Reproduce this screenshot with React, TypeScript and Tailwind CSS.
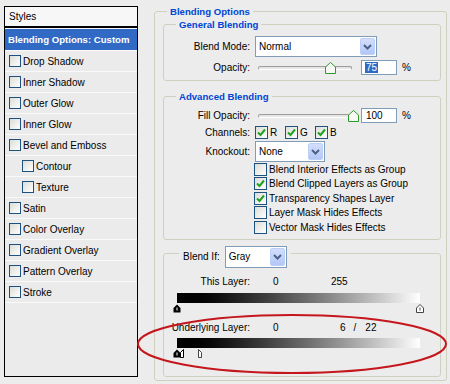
import React from 'react'

const styleItems: [string, boolean][] = [
  ['Drop Shadow', false],
  ['Inner Shadow', false],
  ['Outer Glow', false],
  ['Inner Glow', false],
  ['Bevel and Emboss', false],
  ['Contour', true],
  ['Texture', true],
  ['Satin', false],
  ['Color Overlay', false],
  ['Gradient Overlay', false],
  ['Pattern Overlay', false],
  ['Stroke', false],
]

const options: [string, boolean][] = [
  ['Blend Interior Effects as Group', false],
  ['Blend Clipped Layers as Group', true],
  ['Transparency Shapes Layer', true],
  ['Layer Mask Hides Effects', false],
  ['Vector Mask Hides Effects', false],
]

function Box({ on, small }: { on?: boolean; small?: boolean }) {
  return (
    <span
      className={`${small ? 'w-[12px] h-[12px]' : 'w-[13px] h-[13px]'} shrink-0 border border-[#1c5180] bg-linear-to-br from-[#dcdcd7] to-white flex items-center justify-center`}
    >
      {on && (
        <svg width="9" height="9" viewBox="0 0 9 9">
          <path d="M1 4.5 L3.5 7 L8 1.5" fill="none" stroke="#21a121" strokeWidth="2" />
        </svg>
      )}
    </span>
  )
}

function Select({ value, w }: { value: string; w: string }) {
  return (
    <div className={`${w} h-full border border-[#7f9db9] bg-white flex items-center p-[1px]`}>
      <span className="flex-1 pl-[2px]">{value}</span>
      <span className="w-[15px] h-full rounded-[2px] bg-linear-to-b from-[#d3defc] to-[#b3c7f6] border border-[#bccff8] flex items-center justify-center">
        <svg width="9" height="6" viewBox="0 0 9 6">
          <path d="M1 1 L4.5 4.5 L8 1" fill="none" stroke="#4d6185" strokeWidth="2" />
        </svg>
      </span>
    </div>
  )
}

function Slider({ w, pos }: { w: string; pos: number }) {
  return (
    <div className={`relative ${w} h-[15px] flex items-center`}>
      <div className="w-full h-[4px] rounded-[2px] border border-[#9d9c99] border-b-white bg-[#e6e6e6]" />
      <svg className="absolute top-[2px]" style={{ left: pos }} width="11" height="12" viewBox="0 0 11 12">
        <path d="M0.5 11.5 V5 L5.5 0.5 L10.5 5 V11.5 Z" fill="#f7f7f4" stroke="#2a9a2a" />
      </svg>
    </div>
  )
}

export default function App() {
  return (
    <div className="relative w-[450px] h-[384px] overflow-hidden bg-[#ececec] flex items-start text-[10px] leading-[13px] text-black font-['Liberation_Sans',Arial,sans-serif]">
      {/* styles list */}
      <div className="ml-[4px] mt-[6px] w-[134px] h-[371px] border border-black bg-[#ebebeb] flex flex-col">
        <div className="h-[21px] bg-[#f7f7f7] border-b-2 border-black pl-[4px] flex items-center">Styles</div>
        <div className="h-[1px] bg-[#f7f7f7]" />
        <div className="h-[22px] bg-[#316ac5] text-white font-bold text-[9.6px] pl-[3px] flex items-center border-b border-[#fafafa]">
          Blending Options: Custom
        </div>
        {styleItems.map(([label, indent]) => (
          <div
            key={label}
            className={`h-[21px] border-b border-[#fafafa] flex items-center gap-[2px] ${indent ? 'pl-[17px]' : 'pl-[4px]'}`}
          >
            <Box small />
            <span>{label}</span>
          </div>
        ))}
      </div>

      {/* blending options */}
      <fieldset className="ml-[16px] mt-[5px] w-[293px] border border-[#d0d0bf] rounded-[3px] pl-[8px] pb-[3px]">
        <legend className="ml-[4px] px-[3px] text-[#0046d5] font-bold text-[9.6px] leading-[13px]">Blending Options</legend>

        <fieldset className="w-[278px] border border-[#d0d0bf] rounded-[3px] pb-[5px]">
          <legend className="ml-[12px] px-[3px] text-[#0046d5] font-bold text-[9.6px] leading-[13px]">General Blending</legend>
          <div className="mt-[5px] h-[21px] flex items-center">
            <span className="w-[86px] text-right">Blend Mode:</span>
            <div className="ml-[5px] h-full">
              <Select value="Normal" w="w-[122px]" />
            </div>
          </div>
          <div className="mt-[3px] h-[15px] flex items-center">
            <span className="w-[86px] text-right">Opacity:</span>
            <div className="ml-[8px]">
              <Slider w="w-[94px]" pos={67} />
            </div>
            <div className="ml-[9px] w-[36px] h-[15px] border border-[#7f9db9] bg-white flex items-center pl-[3px]">
              <span className="bg-[#316ac5] text-white px-[1px] leading-[11px]">75</span>
            </div>
            <span className="ml-[5px]">%</span>
          </div>
        </fieldset>

        <fieldset className="mt-[9px] w-[278px] border border-[#d0d0bf] rounded-[3px] pb-[4px]">
          <legend className="ml-[12px] px-[3px] text-[#0046d5] font-bold text-[9.6px] leading-[13px]">Advanced Blending</legend>
          <div className="mt-[5px] h-[15px] flex items-center">
            <span className="w-[86px] text-right">Fill Opacity:</span>
            <div className="ml-[8px]">
              <Slider w="w-[92px]" pos={90} />
            </div>
            <div className="ml-[11px] w-[36px] h-[15px] border border-[#7f9db9] bg-white flex items-center pl-[4px]">
              100
            </div>
            <span className="ml-[5px]">%</span>
          </div>
          <div className="mt-[3px] h-[13px] flex items-center">
            <span className="w-[86px] text-right">Channels:</span>
            <div className="ml-[5px] flex items-center">
              {['R', 'G', 'B'].map(c => (
                <span key={c} className="w-[30px] flex items-center gap-[2px]">
                  <Box on />
                  <span>{c}</span>
                </span>
              ))}
            </div>
          </div>
          <div className="mt-[2px] h-[21px] flex items-center">
            <span className="w-[86px] text-right">Knockout:</span>
            <div className="ml-[5px] h-full">
              <Select value="None" w="w-[70px]" />
            </div>
          </div>
          <div className="pl-[90px]">
            {options.map(([label, on]) => (
              <div key={label} className="h-[14.5px] flex items-center gap-[2px]">
                <Box on={on} />
                <span>{label}</span>
              </div>
            ))}
          </div>
        </fieldset>

        <fieldset className="mt-[6px] w-[278px] border border-[#d0d0bf] rounded-[3px] pb-[18px]">
          <legend className="ml-[15px] px-[4px] h-[16px]">
            <div className="flex items-start gap-[5px]">
              <span className="mt-[4px] leading-[13px]">Blend If:</span>
              <div className="h-[22px]">
                <Select value="Gray" w="w-[62px]" />
              </div>
            </div>
          </legend>

          <div className="mt-[13px] h-[13px] flex items-center">
            <span className="w-[86px] text-right">This Layer:</span>
            <span className="ml-[23px] w-[58px]">0</span>
            <span>255</span>
          </div>
          <div className="mt-[5px] ml-[13px] w-[243px] h-[10px] bg-linear-to-r from-black to-white" />
          <svg className="mt-[1px] ml-[6px] block" width="256" height="9" viewBox="0 0 256 9">
            <path d="M7 0.5 L10.5 4 V8.5 H3.5 V4 Z" fill="#000" />
            <path d="M7 3.5 V6.5" stroke="#fff" strokeWidth="1" />
            <path d="M250 0.5 L253.5 4 V8.5 H246.5 V4 Z" fill="#fff" stroke="#444" />
            <path d="M250 3.5 V6.5" stroke="#444" strokeWidth="1" />
          </svg>

          <div className="mt-[8px] h-[13px] flex items-center">
            <span className="w-[86px] text-right">Underlying Layer:</span>
            <span className="ml-[23px] w-[67px]">0</span>
            <span>6</span>
            <span className="ml-[8px]">/</span>
            <span className="ml-[9px]">22</span>
          </div>
          <div className="mt-[4px] ml-[13px] w-[243px] h-[10px] bg-linear-to-r from-black to-white" />
          <svg className="mt-[1px] ml-[6px] block" width="256" height="9" viewBox="0 0 256 9">
            <path d="M7 0.5 L10.5 4 V8.5 H3.5 V4 Z" fill="#000" />
            <path d="M7 3.5 V6.5" stroke="#fff" strokeWidth="1" />
            <path d="M13.5 0.5 V8.5 H10.5 V3.5 Z" fill="#fff" stroke="#000" />
            <path d="M28.5 0.5 L31.5 3.5 V8.5 H28.5 Z" fill="#fff" stroke="#444" />
          </svg>
        </fieldset>
      </fieldset>

      {/* red highlight */}
      <svg className="absolute inset-0 pointer-events-none" width="450" height="384" viewBox="0 0 450 384">
        <ellipse cx="292" cy="344" rx="154" ry="29" fill="none" stroke="#c4161c" strokeWidth="2" />
      </svg>
    </div>
  )
}
